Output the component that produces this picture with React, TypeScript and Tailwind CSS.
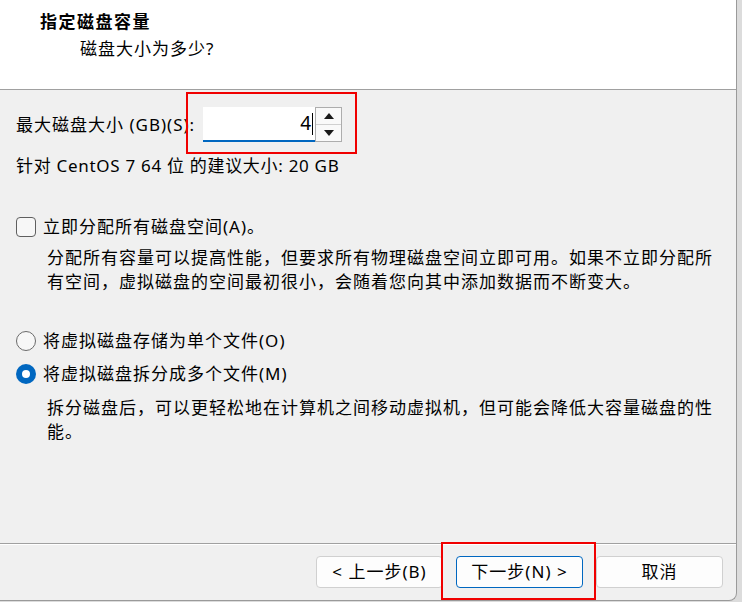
import React from 'react';

const font = "font-['Noto_Sans','Noto_Sans_CJK_SC',sans-serif]";

function Radio({ checked }: { checked?: boolean }) {
  if (checked) {
    return (
      <span className="flex h-[20px] w-[20px] shrink-0 items-center justify-center rounded-full bg-[#0067c0]">
        <span className="h-[8px] w-[8px] rounded-full bg-white" />
      </span>
    );
  }
  return <span className="h-[20px] w-[20px] shrink-0 rounded-full border border-[#6b6b6b] bg-[#f7f7f7]" />;
}

function Spinner() {
  return (
    <div className="flex h-[35px] w-[27px] flex-col border border-[#adadad] bg-[#f0f0f0]">
      <div className="flex flex-1 items-center justify-center border-b border-[#d0d0d0] bg-[#f9f9f9]">
        <svg width="10" height="6" viewBox="0 0 10 6">
          <path d="M0 6 L5 0 L10 6 Z" fill="#1a1a1a" />
        </svg>
      </div>
      <div className="flex flex-1 items-center justify-center bg-[#f9f9f9]">
        <svg width="10" height="6" viewBox="0 0 10 6">
          <path d="M0 0 L10 0 L5 6 Z" fill="#1a1a1a" />
        </svg>
      </div>
    </div>
  );
}

function WizardButton({ label, primary }: { label: string; primary?: boolean }) {
  return (
    <button
      type="button"
      className={
        primary
          ? 'h-[32px] w-[127px] rounded-[4px] border border-[#0067c0] bg-[#fdfdfd] text-[17px] tracking-[1px] text-black'
          : 'h-[32px] w-[127px] rounded-[4px] border border-[#d0d0d0] bg-[#fdfdfd] text-[17px] tracking-[1px] text-black'
      }
    >
      {label}
    </button>
  );
}

export default function App() {
  return (
    <div className={`relative flex h-[602px] w-[742px] overflow-hidden bg-[#dcdcdc] text-black ${font}`}>
      <div className="flex h-[601px] w-[737px] shrink-0 flex-col rounded-br-[8px] border-r border-b border-[#9a9a9a] bg-[#f0f0f0]">
        <header className="h-[90px] shrink-0 border-b border-[#a0a0a0] bg-white">
          <h1 className="pl-[40px] pt-[10px] text-[17px] font-bold leading-[24px] tracking-[1.5px]">指定磁盘容量</h1>
          <p className="pl-[80px] pt-[3px] text-[17px] leading-[24px] tracking-[1px]">磁盘大小为多少?</p>
        </header>

        <main className="flex flex-col px-[16px]">
          <div className="mt-[17px] flex h-[35px] items-center">
            <label className="w-[187px] shrink-0 text-[17px] tracking-[1px]">最大磁盘大小 (GB)(S):</label>
            <div className="flex h-[35px] w-[112px] items-center justify-end border-b-2 border-[#0067c0] bg-white pr-[2px]">
              <span className="text-[19px] leading-none">4</span>
              <span className="ml-[1px] h-[22px] w-[1px] bg-black" />
            </div>
            <Spinner />
          </div>

          <p className="mt-[12px] text-[17px] leading-[24px] tracking-[0.7px]">针对 CentOS 7 64 位 的建议大小: 20 GB</p>

          <div className="mt-[37px] flex h-[24px] items-center gap-[7px]">
            <span className="h-[20px] w-[20px] shrink-0 rounded-[4px] border-[1.5px] border-[#5f5f5f] bg-[#f7f7f7]" />
            <span className="text-[17px] tracking-[1px]">立即分配所有磁盘空间(A)。</span>
          </div>
          <p className="mt-[7px] ml-[31px] w-[676px] text-[17px] leading-[24px] tracking-[1px]">
            分配所有容量可以提高性能，但要求所有物理磁盘空间立即可用。如果不立即分配所有空间，虚拟磁盘的空间最初很小，会随着您向其中添加数据而不断变大。
          </p>

          <div className="mt-[35px] flex h-[24px] items-center gap-[7px]">
            <Radio />
            <span className="text-[17px] tracking-[1px]">将虚拟磁盘存储为单个文件(O)</span>
          </div>
          <div className="mt-[9px] flex h-[24px] items-center gap-[7px]">
            <Radio checked />
            <span className="text-[17px] tracking-[1px]">将虚拟磁盘拆分成多个文件(M)</span>
          </div>
          <p className="mt-[10px] ml-[31px] w-[676px] text-[17px] leading-[24px] tracking-[1px]">
            拆分磁盘后，可以更轻松地在计算机之间移动虚拟机，但可能会降低大容量磁盘的性能。
          </p>
        </main>

        <footer className="mt-auto flex h-[57px] shrink-0 items-start justify-end gap-[13px] border-t border-[#a0a0a0] pt-[12px] pr-[13px] shadow-[inset_0_1px_0_#ffffff]">
          <WizardButton label="< 上一步(B)" />
          <WizardButton label="下一步(N) >" primary />
          <WizardButton label="取消" />
        </footer>
      </div>

      <div className="absolute left-[186px] top-[92px] h-[62px] w-[171px] border-2 border-[#f00000]" />
      <div className="absolute left-[441px] top-[542px] h-[58px] w-[155px] border-2 border-[#f00000]" />
    </div>
  );
}
